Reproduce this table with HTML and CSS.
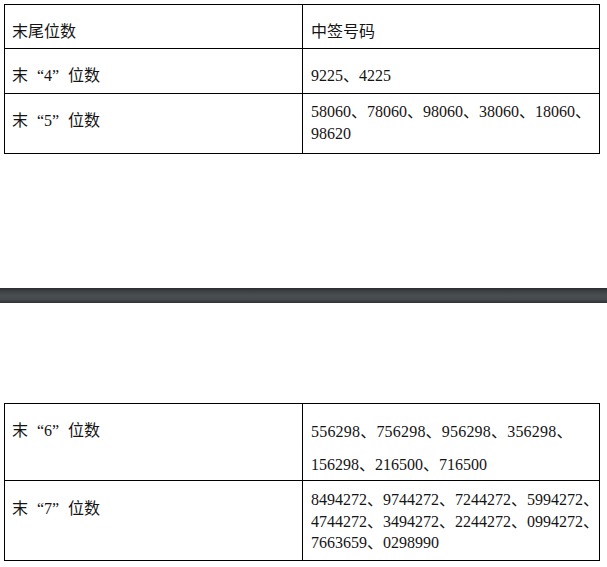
FILE: index.html
```html
<!DOCTYPE html>
<html lang="zh-CN">
<head>
<meta charset="utf-8">
<title>中签号码</title>
<link rel="stylesheet" href="styles.css">
</head>
<body>
<div class="page">
  <div class="tbl tbl-top">
    <div class="cell left r-head">末尾位数</div>
    <div class="cell right r-head">中签号码</div>
    <div class="cell left r4">末<span class="q ql">“</span>4<span class="q qr">”</span>位数</div>
    <div class="cell right r4">9225、4225</div>
    <div class="cell left r5">末<span class="q ql">“</span>5<span class="q qr">”</span>位数</div>
    <div class="cell right r5"><span class="line">58060、78060、98060、38060、18060、</span><span class="line">98620</span></div>
  </div>

  <div class="bar"></div>

  <div class="tbl tbl-bottom">
    <div class="cell left r6">末<span class="q ql">“</span>6<span class="q qr">”</span>位数</div>
    <div class="cell right r6"><span class="line l6a">556298、756298、956298、356298、</span><span class="line l6b">156298、216500、716500</span></div>
    <div class="cell left r7">末<span class="q ql">“</span>7<span class="q qr">”</span>位数</div>
    <div class="cell right r7"><span class="line">8494272、9744272、7244272、5994272、</span><span class="line">4744272、3494272、2244272、0994272、</span><span class="line">7663659、0298990</span></div>
  </div>
</div>
</body>
</html>
```

FILE: styles.css
```css
html, body {
  margin: 0;
  padding: 0;
  background: #ffffff;
}

body {
  font-family: "Liberation Serif", "Noto Sans CJK SC", serif;
  font-size: 16px;
  color: #141414;
}

.page {
  padding-top: 4px;
  width: 607px;
}

.tbl {
  display: grid;
  grid-template-columns: 298px 297px;
  width: max-content;
  margin-left: 4px;
  border-top: 1px solid #000;
  border-left: 1px solid #000;
}

.cell {
  box-sizing: border-box;
  border-right: 1px solid #000;
  border-bottom: 1px solid #000;
  line-height: 20px;
  white-space: nowrap;
}

.left {
  padding-left: 7px;
  padding-top: 17px;
}

.right {
  padding-left: 8px;
  padding-top: 17px;
}

.line {
  display: block;
}

.q {
  display: inline-block;
  width: 1em;
}

.ql {
  text-align: right;
}

.qr {
  text-align: left;
}

/* row heights */
.r-head { height: 44px; }
.r4 { height: 45px; }
.r5 { height: 60px; }
.r6 { height: 77px; }
.r7 { height: 80px; }

.right.r5 {
  padding-top: 7px;
  line-height: 22px;
}

.right.r6 {
  padding-top: 18px;
}

.l6b {
  margin-top: 13px;
}

.l6a {
  letter-spacing: 0.2px;
}

.left.r7 {
  padding-top: 18px;
}

.right.r7 {
  padding-top: 8px;
  line-height: 21.7px;
}

.bar {
  margin-top: 134px;
  height: 15px;
  background: linear-gradient(to bottom, #2a2c2f 0%, #3d4043 20%, #4b4e51 50%, #484b4e 75%, #3a3d40 90%, #2e3134 100%);
}

.tbl-bottom {
  margin-top: 100px;
}
```
